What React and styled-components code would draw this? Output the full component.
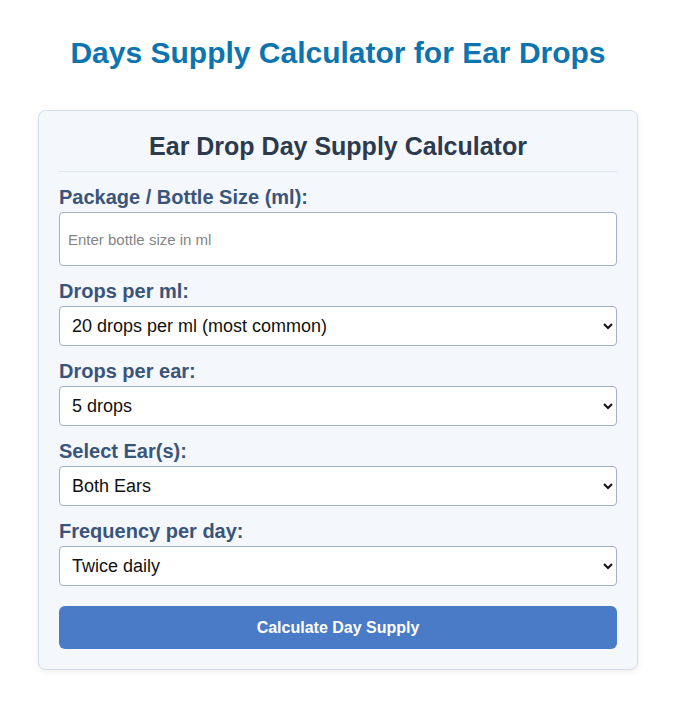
import React from 'react'
import styled, { createGlobalStyle } from 'styled-components';

const GlobalStyle = createGlobalStyle`
  body {
    margin: 0;
    background: #ffffff;
    font-family: "Liberation Sans", Arial, sans-serif;
  }
`;

const Page = styled.div`
  padding: 36px 39px 38px 38px;
`;

const PageTitle = styled.h1`
  margin: 0 0 40px;
  text-align: center;
  font-size: 30px;
  line-height: 34px;
  font-weight: bold;
  color: #0c74ae;
`;

const Card = styled.div`
  box-sizing: border-box;
  max-width: 600px;
  margin: 0 auto;
  padding: 20px;
  background: #f4f7fc;
  border: 1px solid #d3deec;
  border-radius: 8px;
  box-shadow: 0 2px 6px rgba(0, 0, 0, 0.08);
`;

const CardTitle = styled.h2`
  margin: 0 0 14px;
  padding-bottom: 10px;
  text-align: center;
  font-size: 25px;
  line-height: 30px;
  color: #2c3a4d;
  border-bottom: 1px solid #dfe5ee;
`;

const Group = styled.div`
  display: flex;
  flex-direction: column;
  gap: 3px;
  margin-bottom: ${props => props.last ? '20px' : '14px'};
`;

const Label = styled.label`
  font-size: 20px;
  line-height: 23px;
  font-weight: bold;
  color: #3a5579;
`;

const TextInput = styled.input`
  box-sizing: border-box;
  height: 54px;
  width: 100%;
  padding: 0 8px;
  font-family: "Liberation Sans", Arial, sans-serif;
  font-size: 15px;
  background: #ffffff;
  border: 1px solid #a3b1c4;
  border-radius: 4px;
  &::placeholder {
    color: #858585;
  }
`;

const Select = styled.select`
  box-sizing: border-box;
  height: 40px;
  width: 100%;
  padding: 0 8px;
  font-family: "Liberation Sans", Arial, sans-serif;
  font-size: 18px;
  color: #111;
  background: #ffffff;
  border: 1px solid #a3b1c4;
  border-radius: 4px;
`;

const Button = styled.button`
  display: block;
  width: 100%;
  height: 43px;
  border: none;
  border-radius: 6px;
  background: #4a7bc6;
  color: #ffffff;
  font-family: "Liberation Sans", Arial, sans-serif;
  font-size: 16px;
  font-weight: bold;
  cursor: pointer;
`;

const fields = [
  { label: 'Drops per ml:', options: ['20 drops per ml (most common)', '15 drops per ml', '25 drops per ml'] },
  { label: 'Drops per ear:', options: ['5 drops', '1 drop', '2 drops', '3 drops', '4 drops'] },
  { label: 'Select Ear(s):', options: ['Both Ears', 'Left Ear', 'Right Ear'] },
  { label: 'Frequency per day:', options: ['Twice daily', 'Once daily', 'Three times daily', 'Four times daily'] },
];

const App = () => {
  return (
    <>
      <GlobalStyle />
      <Page>
        <PageTitle>Days Supply Calculator for Ear Drops</PageTitle>
        <Card>
          <CardTitle>Ear Drop Day Supply Calculator</CardTitle>
          <Group>
            <Label>Package / Bottle Size (ml):</Label>
            <TextInput type="number" placeholder="Enter bottle size in ml" />
          </Group>
          {fields.map((f, i) => (
            <Group key={f.label} last={i === fields.length - 1}>
              <Label>{f.label}</Label>
              <Select defaultValue={f.options[0]}>
                {f.options.map(o => <option key={o}>{o}</option>)}
              </Select>
            </Group>
          ))}
          <Button>Calculate Day Supply</Button>
        </Card>
      </Page>
    </>
  )
}

export default App;
